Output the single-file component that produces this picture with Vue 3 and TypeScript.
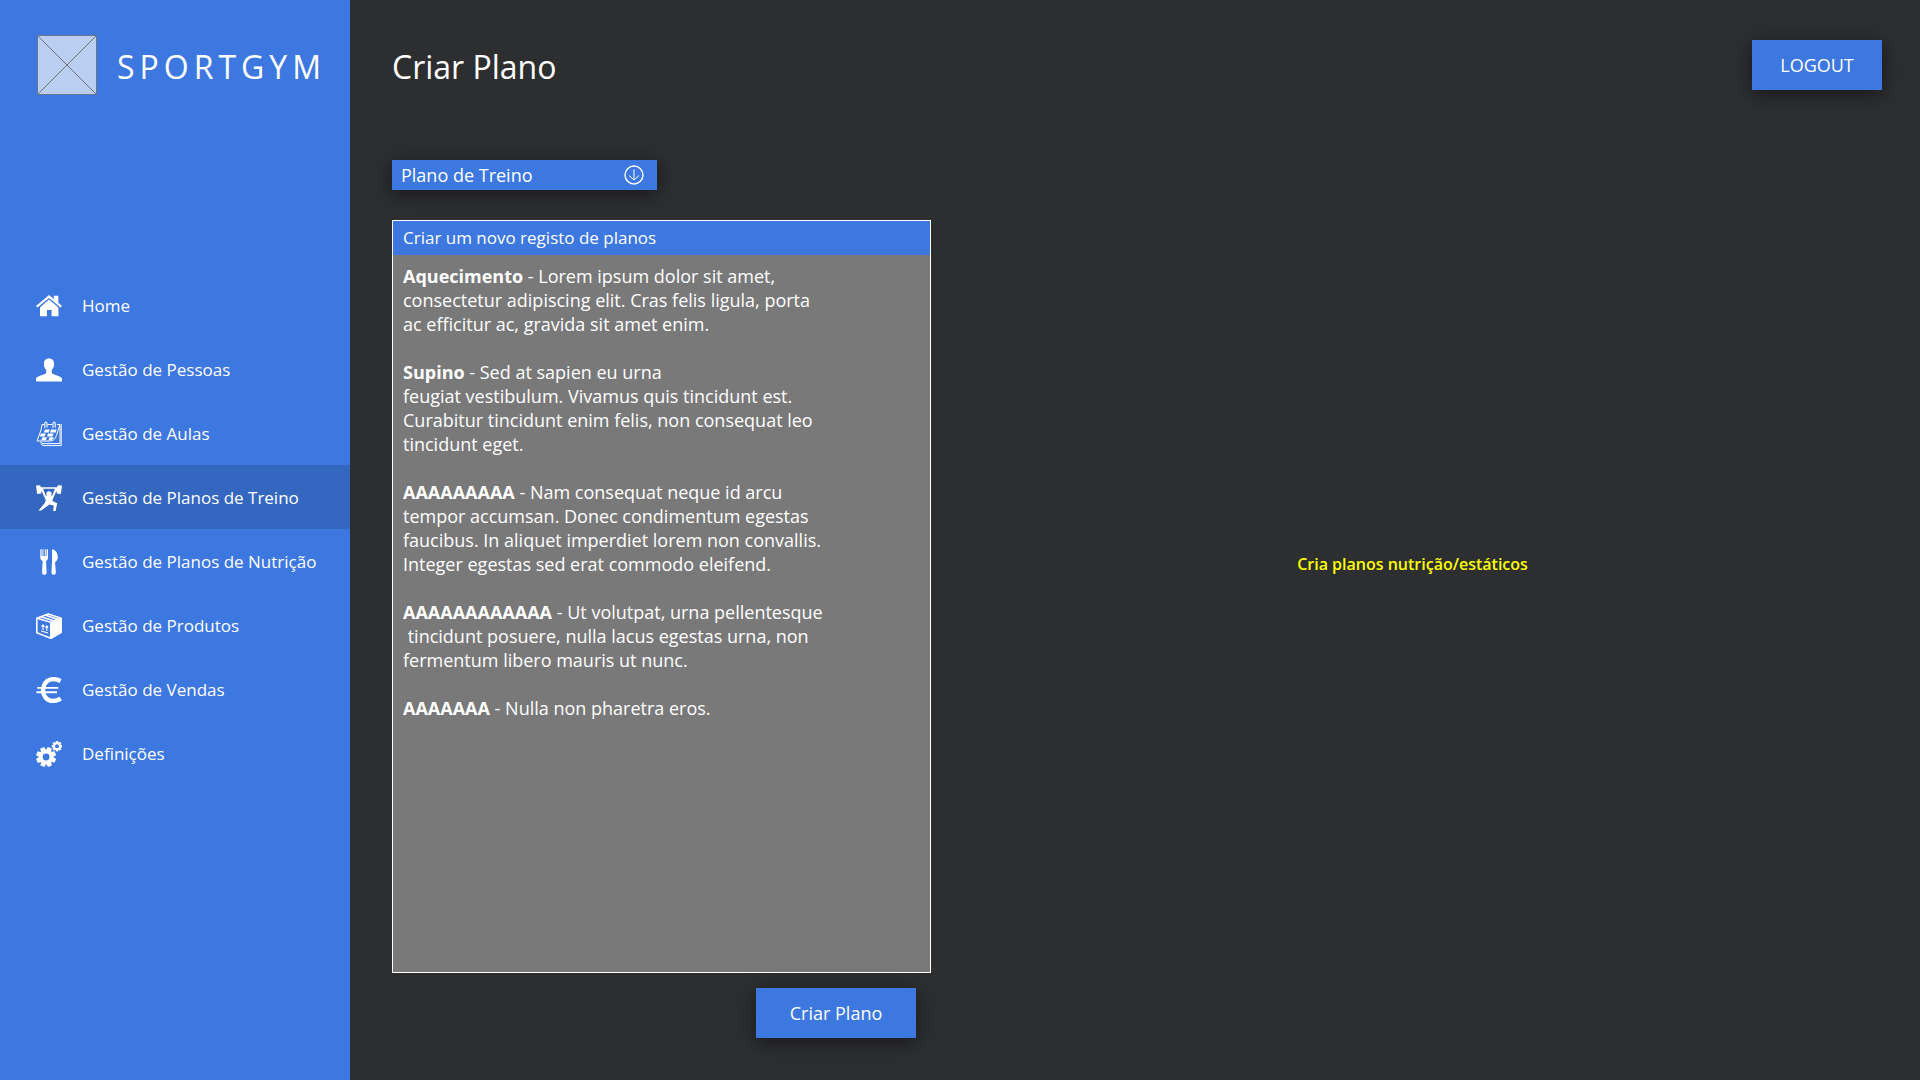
<script setup lang="ts">
import { ref } from 'vue'

interface MenuItem {
  label: string
  icon: string
}

interface Exercise {
  name: string
  lines: string[]
}

const menu: MenuItem[] = [
  { label: 'Home', icon: 'home' },
  { label: 'Gestão de Pessoas', icon: 'person' },
  { label: 'Gestão de Aulas', icon: 'calendar' },
  { label: 'Gestão de Planos de Treino', icon: 'lifter' },
  { label: 'Gestão de Planos de Nutrição', icon: 'cutlery' },
  { label: 'Gestão de Produtos', icon: 'box' },
  { label: 'Gestão de Vendas', icon: 'euro' },
  { label: 'Definições', icon: 'gears' },
]

const current = ref('lifter')
const plan = ref('Plano de Treino')

const exercises: Exercise[] = [
  {
    name: 'Aquecimento',
    lines: [
      'Lorem ipsum dolor sit amet,',
      'consectetur adipiscing elit. Cras felis ligula, porta',
      'ac efficitur ac, gravida sit amet enim.',
    ],
  },
  {
    name: 'Supino',
    lines: [
      'Sed at sapien eu urna',
      'feugiat vestibulum. Vivamus quis tincidunt est.',
      'Curabitur tincidunt enim felis, non consequat leo',
      'tincidunt eget.',
    ],
  },
  {
    name: 'AAAAAAAAA',
    lines: [
      'Nam consequat neque id arcu',
      'tempor accumsan. Donec condimentum egestas',
      'faucibus. In aliquet imperdiet lorem non convallis.',
      'Integer egestas sed erat commodo eleifend.',
    ],
  },
  {
    name: 'AAAAAAAAAAAA',
    lines: [
      'Ut volutpat, urna pellentesque',
      ' tincidunt posuere, nulla lacus egestas urna, non',
      'fermentum libero mauris ut nunc.',
    ],
  },
  { name: 'AAAAAAA', lines: ['Nulla non pharetra eros.'] },
]

// each bar crosses the whole gear, so four of them make eight teeth
const teeth = [0, 45, 90, 135]
</script>

<template>
  <div class="app">
    <aside class="sidebar">
      <div class="brand">
        <svg class="logo" viewBox="0 0 60 60" aria-hidden="true">
          <rect x="0.5" y="0.5" width="59" height="59" fill="#bacef2" stroke="#6a7690" />
          <path d="M1 1L59 59M59 1L1 59" stroke="#6b7079" fill="none" />
        </svg>
        <span class="brand-name">SPORTGYM</span>
      </div>
      <nav class="menu">
        <a
          v-for="item in menu"
          :key="item.icon"
          href="#"
          class="menu-item"
          :class="{ active: item.icon === current }"
          @click.prevent="current = item.icon"
        >
          <svg class="icon" viewBox="0 0 26 26" aria-hidden="true">
            <g v-if="item.icon === 'home'" fill="#fff">
              <path d="M13 2L17.8 6V2.8H22.3V9.8L26 13L24.6 14.6L13 5L1.4 14.6L0 13Z" />
              <path d="M13 6.6L22.4 14.4V23.2H15.6V17H11V23.2H4V14.4Z" />
            </g>
            <path
              v-else-if="item.icon === 'person'"
              fill="#fff"
              d="M13 1.5C16.4 1.5 18.2 3.6 18.1 7C18.1 9.6 17.2 11.6 15.8 13V16C17 18 25.8 18.6 26 22V24.6H0V22C.2 18.6 9 18 10.2 16V13C8.8 11.6 7.9 9.6 7.9 7C7.8 3.6 9.6 1.5 13 1.5Z"
            />
            <g v-else-if="item.icon === 'calendar'" fill="none" stroke="#fff">
              <path d="M8 3.5H6L5 9L1 20H14.5C18 19.5 19.5 17.5 20.4 14.5L24 3.5H21M11.5 3.5H16" stroke-width="1" />
              <path d="M25.2 3V24.6H7L4.6 22.4M24 5V22.6H6L4.6 20.5" stroke-width="1" />
              <path d="M8.8 7V3C8.8 .2 11 .6 11 3V6.5M17 7V3C17 .2 19.3 .6 19.3 3V6.5" stroke-width="1.1" />
              <path
                d="M9 8.5H13.6L12.6 11.6H7.8ZM15 8.5H20.6L19.6 11.6H14ZM5 12.4H9.8L8.6 15.4H3.8ZM12 12.4H17.6L16.4 15.4H11ZM6.5 16.2H11L9.8 19.2H5.2ZM13.6 16.2H18L15.8 19.2H12.4Z"
                fill="#fff"
                stroke="none"
              />
            </g>
            <g v-else-if="item.icon === 'lifter'">
              <path
                fill="#fff"
                d="M0 .6L4 .2L5 2.2H21L22 .2L26 .6L24.9 9L20.8 8.4L20.5 5.7L17.2 13.2L16.3 16L21.2 18.2L19.6 26H17.2L17.8 20.4L13.3 19.4L5.2 25.6L2.6 25.4L8.8 18L9.8 15.2L5.5 5.7L5.2 8.4L1.1 9Z"
              />
              <path fill="#3467bf" d="M7.1 3.7H18.9L16.3 10.6H9.7Z" />
              <circle cx="13" cy="8.8" r="2.6" fill="#fff" />
            </g>
            <g v-else-if="item.icon === 'cutlery'" fill="#fff">
              <path
                d="M4.3.2H5.6V7H6.4V.2H7.4V7.3H8.8V.2H9.8V7H10.6V.2H12V8.5C12 10.5 11.3 11.4 10 12L10.6 23.5C10.6 26.6 6 26.6 6 23.5L6.7 12C5.2 11.4 4.3 10.4 4.3 8.5Z"
              />
              <path d="M16 .3C19.6.3 22.2 5 21.7 9C21.4 11.7 20 12.5 19 13.2L19.9 23.5C19.9 26.6 15.4 26.6 15.5 23.5L16.1 12Z" />
            </g>
            <g v-else-if="item.icon === 'box'">
              <path
                d="M12.2.9L25.2 5.3V19.3L14.8 25.2L.8 19.8V5.2Z"
                fill="none"
                stroke="#fff"
                stroke-width="1.6"
                stroke-linejoin="round"
              />
              <path fill="#fff" d="M15 9.8L26 5.4V19.6L15 26Z" />
              <path fill="none" stroke="#fff" stroke-width="1.7" d="M1 5.2L14.5 9.2L25 5.2M14.8 9V24.5M4.8 3.8L17.7 7.8M9 2L21.5 6.4" />
              <path fill="none" stroke="#fff" stroke-width="1.1" d="M7 17V11.8M10.8 18V12.8M5.6 13.6L7 11.8L8.4 13.6M9.4 14.6L10.8 12.8L12.2 14.6M5.2 18L12 20" />
            </g>
            <g v-else-if="item.icon === 'euro'" fill="none" stroke="#fff">
              <path d="M24.6 4C18.5.8 11 1.5 8.2 8C6.6 12 6.8 17 9.6 20.6C13 25 19.5 25 24.8 21.6" stroke-width="4.4" />
              <path d="M1.2 10.9H22.3M.4 15.3H21" stroke-width="1.9" />
            </g>
            <g v-else>
              <g fill="#fff">
                <rect v-for="t in teeth" :key="t" x="7.7" y="6" width="4.8" height="20" rx="1" :transform="`rotate(${t + 22} 10.1 16)`" />
                <circle cx="10.1" cy="16" r="7.6" />
                <rect v-for="t in teeth" :key="t" x="19.8" y="0" width="2.4" height="10.4" :transform="`rotate(${t} 21 5.2)`" />
                <circle cx="21" cy="5.2" r="3.9" />
              </g>
              <circle cx="10.1" cy="16" r="3.4" fill="#3d77e0" />
              <circle cx="21" cy="5.2" r="2" fill="#3d77e0" />
            </g>
          </svg>
          <span>{{ item.label }}</span>
        </a>
      </nav>
    </aside>

    <main class="main">
      <header class="topbar">
        <h1 class="title">Criar Plano</h1>
        <button type="button" class="btn logout">LOGOUT</button>
      </header>

      <div class="content">
        <section class="left">
          <div class="picker">
            <select v-model="plan" aria-label="Tipo de plano">
              <option>Plano de Treino</option>
            </select>
            <svg class="arrow" viewBox="0 0 20 20" aria-hidden="true">
              <g fill="none" stroke="#fff">
                <circle cx="10" cy="10" r="9" stroke-width="1.4" />
                <path d="M10 4.5V15M5 10.5L10 15L15 10.5" />
              </g>
            </svg>
          </div>
          <article class="panel">
            <h2 class="panel-title">Criar um novo registo de planos</h2>
            <div class="panel-body">
              <section v-for="ex in exercises" :key="ex.name">
                <p v-for="(line, i) in ex.lines" :key="i"><strong v-if="i === 0">{{ ex.name }}</strong><span>{{ i === 0 ? ' - ' + line : line }}</span></p>
              </section>
            </div>
          </article>
        </section>
        <p class="note">Cria planos nutrição/estáticos</p>
        <div class="actions">
          <button type="button" class="btn create">Criar Plano</button>
        </div>
      </div>
    </main>
  </div>
</template>

<style>
body {
  margin: 0;
  background: #2d2e30;
}
</style>

<style scoped>
.app {
  display: flex;
  min-height: 100vh;
  color: #fff;
  font-family: 'Segoe UI', 'Open Sans', 'Noto Sans', sans-serif;
  font-size: 18px;
  line-height: 24px;
  background: #2d2e30;
}

.sidebar {
  flex: 0 0 350px;
  background: #3d77e0;
}

.brand {
  display: flex;
  align-items: center;
  gap: 20px;
  height: 60px;
  padding: 35px 0 0 37px;
}

.logo {
  width: 60px;
  height: 60px;
}

.brand-name {
  padding-top: 3px;
  font-size: 32px;
  line-height: 40px;
  letter-spacing: 5px;
}

.menu {
  display: flex;
  flex-direction: column;
  margin-top: 178px;
}

.menu-item {
  box-sizing: border-box;
  display: flex;
  align-items: center;
  gap: 20px;
  height: 64px;
  padding: 2px 0 0 36px;
  color: #fff;
  font-size: 17px;
  text-decoration: none;
  white-space: nowrap;
}

.menu-item.active {
  background: #3467bf;
}

.icon {
  width: 26px;
  height: 26px;
}

.main {
  display: flex;
  flex: 1;
  flex-direction: column;
  gap: 70px;
  padding: 40px 38px 42px 42px;
}

.topbar {
  display: flex;
  align-items: center;
  justify-content: space-between;
}

.title {
  margin: 0;
  padding-top: 3px;
  font-size: 32px;
  font-weight: 400;
  line-height: 40px;
}

.btn {
  height: 50px;
  border: 0;
  color: #fff;
  background: #3d77e0;
  box-shadow: 0 4px 20px rgba(0, 0, 0, 0.5);
  font-family: inherit;
  font-size: 18px;
}

.logout {
  width: 130px;
}

.create {
  width: 160px;
}

.content {
  display: grid;
  flex: 1;
  grid-template-columns: minmax(0, 539fr) minmax(0, 951fr);
  grid-template-rows: 1fr auto;
  row-gap: 15px;
}

.left {
  display: flex;
  flex-direction: column;
  gap: 30px;
}

.picker {
  position: relative;
  width: 265px;
  height: 30px;
  box-shadow: 0 4px 20px rgba(0, 0, 0, 0.5);
}

.picker select {
  width: 100%;
  height: 100%;
  padding: 0 40px 0 9px;
  border: 0;
  border-radius: 0;
  appearance: none;
  color: #fff;
  background: #3d77e0;
  font-family: inherit;
  font-size: 18px;
}

.arrow {
  position: absolute;
  top: 5px;
  right: 13px;
  width: 20px;
  height: 20px;
  pointer-events: none;
}

.panel {
  flex: 1;
  border: 1px solid #fff;
  background: #797979;
}

.panel-title {
  margin: 0;
  padding: 0 10px;
  background: #3d77e0;
  font-size: 17px;
  font-weight: 400;
  line-height: 34px;
}

.panel-body {
  display: flex;
  flex-direction: column;
  gap: 24px;
  padding: 9px 10px;
}

.panel-body p {
  margin: 0;
  white-space: pre-wrap;
}

.note {
  align-self: center;
  margin: 0;
  padding: 0 0 6px 12px;
  color: #ff0;
  font-size: 16px;
  font-weight: 600;
  text-align: center;
}

.actions {
  display: flex;
  grid-column: 1;
  justify-content: flex-end;
  padding-right: 15px;
}
</style>
